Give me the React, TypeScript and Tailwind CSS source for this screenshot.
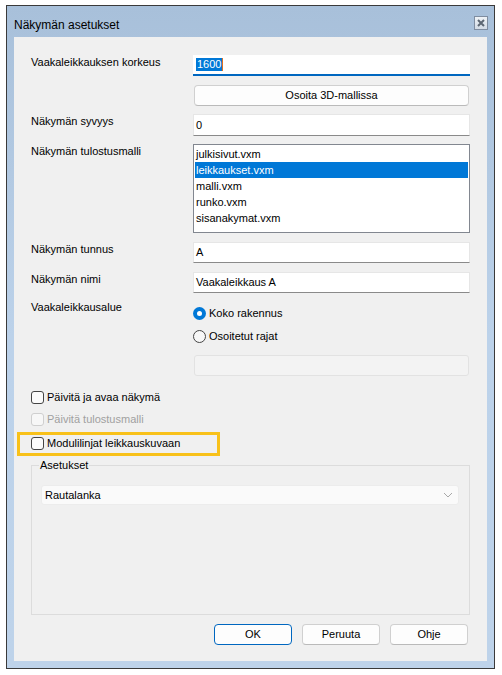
import React from "react";

const font = { fontFamily: '"Liberation Sans", Arial, sans-serif' };

const templates = [
  "julkisivut.vxm",
  "leikkaukset.vxm",
  "malli.vxm",
  "runko.vxm",
  "sisanakymat.vxm",
];

const Row = ({
  label,
  children,
  className = "",
}: {
  label: string;
  children: React.ReactNode;
  className?: string;
}) => (
  <div className={`flex ${className}`}>
    <div className="w-[162px] shrink-0 leading-[15px]">{label}</div>
    <div className="w-[277px]">{children}</div>
  </div>
);

const TextBox = ({ value, h = "h-[21px]" }: { value: string; h?: string }) => (
  <div
    className={`${h} bg-white border border-[#e6e6e6] border-b-[#8a8a8a] px-[2px] flex items-center leading-[15px]`}
  >
    {value}
  </div>
);

const Check = ({
  label,
  disabled,
}: {
  label: string;
  disabled?: boolean;
}) => (
  <div className="flex items-center gap-[3px] h-[20px]">
    <div
      className={`w-[13px] h-[13px] rounded-[3px] border ${
        disabled
          ? "border-[#cfcfcf] bg-[#f7f7f7]"
          : "border-[#444] bg-[#fbfbfb]"
      }`}
    />
    <span className={disabled ? "text-[#a0a0a0]" : "text-black"}>{label}</span>
  </div>
);

const Btn = ({ label, primary }: { label: string; primary?: boolean }) => (
  <button
    className={`w-[78px] h-[21px] rounded-[4px] border bg-[#fdfdfd] leading-[15px] ${
      primary ? "border-[#0067c0]" : "border-[#d0d0d0] border-b-[#bababa]"
    }`}
  >
    {label}
  </button>
);

export default function App() {
  return (
    <div
      className="w-[502px] h-[675px] bg-white pt-[5px] pl-[6px] text-[11px] text-black"
      style={font}
    >
      <div className="w-[489px] h-[664px] border border-[#3a3a3a] bg-gradient-to-b from-[#a8c0da] via-[#bcd2ea] to-[#bed3ea] flex flex-col">
        {/* title bar */}
        <div className="h-[31px] flex items-start justify-between pl-[7px] pr-[6px] pt-[10px]">
          <span className="text-[12px] leading-[15px] mt-[2px]">Näkymän asetukset</span>
          <div className="w-[14px] h-[14px] border border-[#7f8da0] bg-gradient-to-b from-[#eef2f6] to-[#d3dbe5] flex items-center justify-center">
            <svg width="8" height="8" viewBox="0 0 8 8">
              <path d="M1 1L7 7M7 1L1 7" stroke="#5d6773" strokeWidth="2" />
            </svg>
          </div>
        </div>

        {/* client */}
        <div className="ml-[7px] w-[473px] h-[624px] bg-[#f0f0f0] px-[17px] flex flex-col">
          <Row label="Vaakaleikkauksen korkeus" className="mt-[18px]">
            <div className="h-[21px] bg-white border-b-2 border-[#0067c0] pl-[3px] flex items-center">
              <span className="bg-[#0078d7] text-white leading-[13px] h-[13px] px-[1px]">1600</span>
              <span className="w-[1px] h-[13px] bg-[#e07020]" />
            </div>
          </Row>

          <div className="mt-[9px] ml-[163px] w-[275px] h-[21px] rounded-[4px] border border-[#d0d0d0] border-b-[#bababa] bg-[#fdfdfd] flex items-center justify-center leading-[15px]">
            Osoita 3D-mallissa
          </div>

          <Row label="Näkymän syvyys" className="mt-[8px]">
            <TextBox value="0" h="h-[22px]" />
          </Row>

          <Row label="Näkymän tulostusmalli" className="mt-[8px]">
            <div className="h-[89px] bg-white border border-[#828790] pt-px">
              {templates.map((t, i) => (
                <div
                  key={t}
                  className={`h-[16px] mx-px pl-px flex items-center leading-[15px] ${
                    i === 1 ? "bg-[#0078d7] text-white" : ""
                  }`}
                >
                  {t}
                </div>
              ))}
            </div>
          </Row>

          <Row label="Näkymän tunnus" className="mt-[9px]">
            <TextBox value="A" />
          </Row>

          <Row label="Näkymän nimi" className="mt-[9px]">
            <TextBox value="Vaakaleikkaus A" />
          </Row>

          <Row label="Vaakaleikkausalue" className="mt-[7px]">
            <div className="pt-[3px] flex flex-col gap-[3px]">
              <div className="h-[20px] flex items-center gap-[3px]">
                <div className="w-[13px] h-[13px] rounded-full bg-[#0078d7] flex items-center justify-center">
                  <div className="w-[5px] h-[5px] rounded-full bg-white" />
                </div>
                <span>Koko rakennus</span>
              </div>
              <div className="h-[20px] flex items-center gap-[3px]">
                <div className="w-[13px] h-[13px] rounded-full border border-[#444] bg-[#f7f7f7]" />
                <span>Osoitetut rajat</span>
              </div>
            </div>
            <div className="mt-[9px] ml-px w-[275px] h-[21px] rounded-[3px] border border-[#e2e2e2] bg-[#f3f3f3]" />
          </Row>

          <div className="mt-[11px]">
            <Check label="Päivitä ja avaa näkymä" />
          </div>
          <div className="mt-[2px]">
            <Check label="Päivitä tulostusmalli" disabled />
          </div>
          <div className="mt-[3px] -ml-[14px] w-[203px] h-[24px] border-[3px] border-[#f8c11a] pl-[11px] flex items-center pb-[2px]">
            <Check label="Modulilinjat leikkauskuvaan" />
          </div>

          <fieldset className="mt-[2px] h-[157px] w-[439px] border border-[#dcdcdc]">
            <legend className="ml-[7px] px-px leading-[15px]">Asetukset</legend>
            <div className="mt-[12px] ml-[9px] w-[418px] h-[20px] rounded-[3px] border border-[#ececec] bg-[#fafafa] pl-[3px] pr-[5px] flex items-center justify-between leading-[15px]">
              <span>Rautalanka</span>
              <svg width="10" height="6" viewBox="0 0 10 6">
                <path d="M1 1L5 5L9 1" stroke="#a8a8a8" fill="none" strokeWidth="1" />
              </svg>
            </div>
          </fieldset>

          <div className="mt-[9px] flex justify-end gap-[10px] pr-[2px]">
            <Btn label="OK" primary />
            <Btn label="Peruuta" />
            <Btn label="Ohje" />
          </div>
        </div>
      </div>
    </div>
  );
}
